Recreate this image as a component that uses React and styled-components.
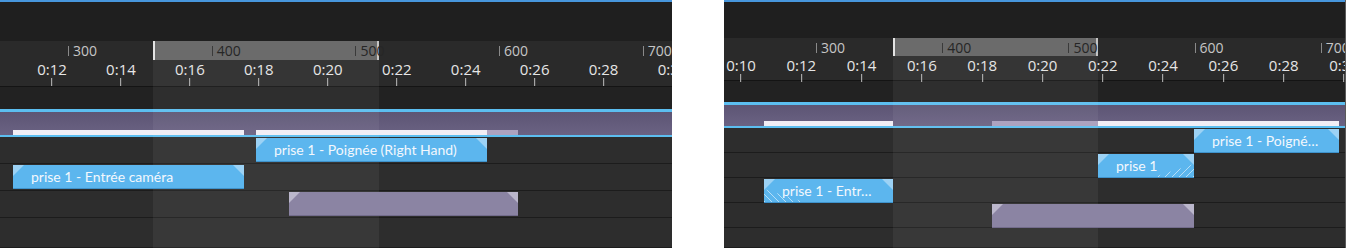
import React from "react";
import styled, { createGlobalStyle } from "styled-components";

const GlobalStyle = createGlobalStyle`
  html, body {
    margin: 0;
    padding: 0;
    background: #ffffff;
  }
  body {
    width: 1350px;
    height: 248px;
    overflow: hidden;
  }
`;

const range = (n) => Array.from({ length: n }, (_, i) => i);

const panels = [
  {
    id: "before",
    width: 672,
    sizes: { top: 39, frames: 19, codes: 27, gap: 22, audio: 23, row: 27 },
    selection: [153, 379],
    frames: { first: 68, step: 143.7, labels: [300, 400, 500, 600, 700] },
    codes: { first: 52, step: 68.95, from: 12, count: 10 },
    audioBars: [
      { from: 13, to: 244, tone: "white" },
      { from: 256, to: 487, tone: "white" },
      { from: 487, to: 518, tone: "lilac" },
    ],
    rows: [
      [{ from: 256, to: 487, kind: "video", label: "prise 1 - Poignée (Right Hand)" }],
      [{ from: 13, to: 244, kind: "video", label: "prise 1 - Entrée caméra" }],
      [{ from: 289, to: 518, kind: "audio" }],
      [],
    ],
  },
  {
    id: "after",
    width: 622,
    sizes: { top: 36, frames: 18, codes: 25, gap: 21, audio: 21, row: 25 },
    selection: [169, 374],
    frames: { first: 92, step: 126.2, labels: [300, 400, 500, 600, 700] },
    codes: { first: 17, step: 60.3, from: 10, count: 11 },
    audioBars: [
      { from: 40, to: 169, tone: "white" },
      { from: 268, to: 374, tone: "lilac" },
      { from: 374, to: 615, tone: "white" },
    ],
    rows: [
      [{ from: 470, to: 615, kind: "video", label: "prise 1 - Poigné…" }],
      [{ from: 374, to: 470, kind: "video", label: "prise 1", hatch: "right" }],
      [{ from: 40, to: 169, kind: "video", label: "prise 1 - Entr…", hatch: "left" }],
      [{ from: 268, to: 470, kind: "audio" }],
      [],
    ],
  },
];

const Timeline = ({ panel }) => {
  const { sizes, selection } = panel;
  const [selFrom, selTo] = selection;
  const overlayTop = 2 + sizes.top + sizes.frames;

  return (
    <Panel width={panel.width} last={panel.id === "after"}>
      <TopBar h={sizes.top} />
      <FrameRow h={sizes.frames}>
        <RangeHighlight style={{ left: selFrom, width: selTo - selFrom }} />
        {panel.frames.labels.map((label, i) => {
          const x = panel.frames.first + i * panel.frames.step;
          return (
            <FrameMark key={label} inside={x > selFrom && x < selTo} style={{ left: x }}>
              {label}
            </FrameMark>
          );
        })}
      </FrameRow>
      <CodeRow h={sizes.codes}>
        {range(panel.codes.count).map((i) => {
          const sec = panel.codes.from + i * 2;
          return (
            <CodeMark key={sec} style={{ left: panel.codes.first + i * panel.codes.step }}>
              <CodeLabel>0:{sec}</CodeLabel>
              <CodeTick />
            </CodeMark>
          );
        })}
      </CodeRow>
      <Gap h={sizes.gap} />
      <AudioTrack h={sizes.audio}>
        {panel.audioBars.map((bar) => (
          <AudioBar key={bar.from} tone={bar.tone} style={{ left: bar.from, width: bar.to - bar.from }} />
        ))}
      </AudioTrack>
      {panel.rows.map((clips, r) => (
        <TrackRow key={r} h={sizes.row} fill={r === panel.rows.length - 1}>
          {clips.map((clip) => (
            <Clip key={clip.from} kind={clip.kind} style={{ left: clip.from, width: clip.to - clip.from }}>
              {clip.label && <ClipLabel>{clip.label}</ClipLabel>}
              {clip.hatch && <Hatch side={clip.hatch} />}
            </Clip>
          ))}
        </TrackRow>
      ))}
      <Selection style={{ top: overlayTop, left: selFrom, width: selTo - selFrom }} />
    </Panel>
  );
};

const App = () => {
  return (
    <>
      <GlobalStyle />
      <Page>
        {panels.map((panel) => (
          <Timeline key={panel.id} panel={panel} />
        ))}
      </Page>
    </>
  );
};

const Page = styled.div`
  display: flex;
  gap: 52px;
  height: 248px;
`;

const Panel = styled.div`
  position: relative;
  display: flex;
  flex-direction: column;
  flex: 0 0 auto;
  width: ${({ width }) => width}px;
  height: 248px;
  overflow: hidden;
  background: #2e2e2e;
  box-sizing: border-box;
  border-right: ${({ last }) => (last ? "1px solid #5a5a5a" : "none")};
  font-family: "Open Sans", "DejaVu Sans", sans-serif;
`;

const TopBar = styled.div`
  flex: 0 0 auto;
  height: ${({ h }) => h}px;
  border-top: 2px solid #4796dc;
  background: #1f1f1f;
`;

const FrameRow = styled.div`
  position: relative;
  flex: 0 0 auto;
  height: ${({ h }) => h}px;
  background: #2a2a2a;
`;

const RangeHighlight = styled.div`
  position: absolute;
  top: 0;
  bottom: 0;
  box-sizing: border-box;
  background: #6b6b6b;
  border-left: 2px solid #e4e4e4;
  border-right: 2px solid #c4c4c4;
`;

const FrameMark = styled.div`
  position: absolute;
  top: 0;
  padding-left: 5px;
  font-size: 14px;
  line-height: 19px;
  color: ${({ inside }) => (inside ? "#262626" : "#c6c6c6")};

  &::before {
    content: "";
    position: absolute;
    left: 0;
    top: 5px;
    width: 1px;
    height: 10px;
    background: ${({ inside }) => (inside ? "#3a3a3a" : "#8a8a8a")};
  }
`;

const CodeRow = styled.div`
  position: relative;
  flex: 0 0 auto;
  box-sizing: border-box;
  height: ${({ h }) => h}px;
  background: #2a2a2a;
  border-bottom: 1px solid #141414;
`;

const CodeMark = styled.div`
  position: absolute;
  top: -1px;
  z-index: 2;
  display: flex;
  flex-direction: column;
  align-items: center;
  transform: translateX(-50%);
`;

const CodeLabel = styled.span`
  font-size: 15px;
  line-height: 20px;
  color: #e6e6e6;
  white-space: nowrap;
`;

const CodeTick = styled.span`
  width: 1px;
  height: 8px;
  margin-top: -1px;
  background: #bdbdbd;
`;

const Gap = styled.div`
  flex: 0 0 auto;
  height: ${({ h }) => h}px;
  background: #222222;
`;

const AudioTrack = styled.div`
  position: relative;
  flex: 0 0 auto;
  height: ${({ h }) => h}px;
  border-top: 3px solid #5cbef0;
  border-bottom: 2px solid #5cbef0;
  background: linear-gradient(#5d5574, #6a6283);
`;

const AudioBar = styled.div`
  position: absolute;
  bottom: 0;
  z-index: 2;
  height: 5px;
  background: ${({ tone }) => (tone === "white" ? "#f1eef5" : "#ada3c0")};
`;

const TrackRow = styled.div`
  position: relative;
  flex: ${({ fill }) => (fill ? "1 1 auto" : "0 0 auto")};
  box-sizing: border-box;
  height: ${({ h }) => h}px;
  border-bottom: 1px solid #1c1c1c;
  background: #2d2d2d;
`;

const Clip = styled.div`
  position: absolute;
  top: 1px;
  height: 24px;
  z-index: 2;
  box-sizing: border-box;
  display: flex;
  align-items: center;
  overflow: hidden;
  background: ${({ kind }) => (kind === "video" ? "#5cb6ee" : "#8b84a3")};
  border-bottom: 1px solid ${({ kind }) => (kind === "video" ? "#3f93cc" : "#736c8c")};

  &::before,
  &::after {
    content: "";
    position: absolute;
    top: 0;
    width: 11px;
    height: 11px;
    background: ${({ kind }) => (kind === "video" ? "rgba(210, 234, 252, 0.55)" : "rgba(220, 216, 232, 0.6)")};
  }
  &::before {
    left: 0;
    clip-path: polygon(0 0, 100% 0, 0 100%);
  }
  &::after {
    right: 0;
    clip-path: polygon(0 0, 100% 0, 100% 100%);
  }
`;

const ClipLabel = styled.span`
  padding-left: 18px;
  font-family: Lato, "Open Sans", sans-serif;
  font-size: 14px;
  color: #f3f8fd;
  white-space: nowrap;
`;

const Hatch = styled.span`
  position: absolute;
  bottom: 0;
  ${({ side }) => (side === "left" ? "left: 0;" : "right: 0;")}
  width: 40px;
  height: 13px;
  background: repeating-linear-gradient(
    ${({ side }) => (side === "left" ? "45deg" : "-45deg")},
    rgba(255, 255, 255, 0.55) 0 1px,
    transparent 1px 5px
  );
  clip-path: ${({ side }) =>
    side === "left" ? "polygon(0 0, 100% 100%, 0 100%)" : "polygon(100% 0, 100% 100%, 0 100%)"};
`;

const Selection = styled.div`
  position: absolute;
  bottom: 0;
  z-index: 1;
  background: rgba(255, 255, 255, 0.055);
  pointer-events: none;
`;

export default App;
